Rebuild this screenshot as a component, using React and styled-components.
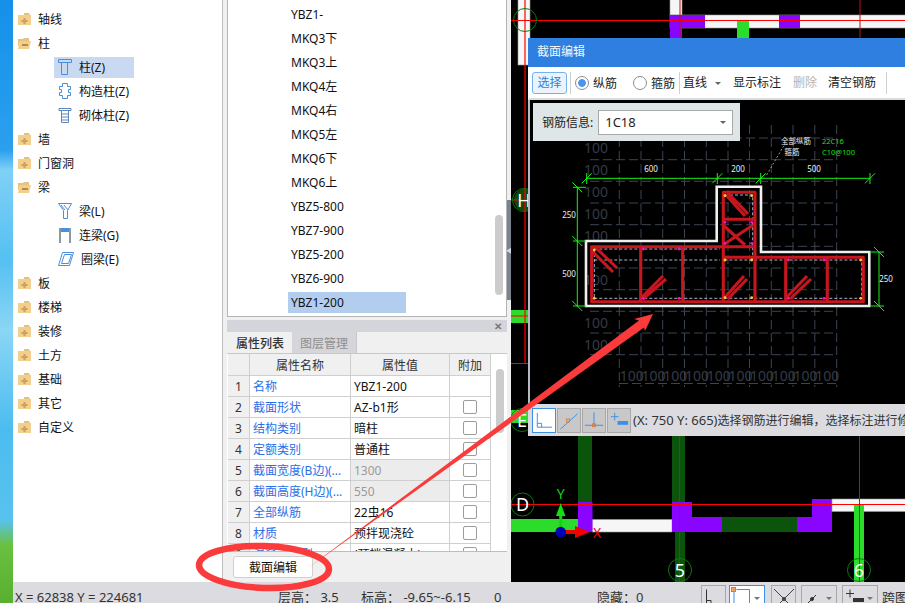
import React from 'react';
import styled, { createGlobalStyle } from 'styled-components';

const FONT = `"Noto Sans", "Noto Sans CJK SC", sans-serif`;

const GlobalStyle = createGlobalStyle`
  html, body { margin:0; padding:0; background:#000; }
  body { font-family:${FONT}; font-size:12px; color:#111; }
`;

const Screen = styled.div`
  position:relative;
  width:905px;
  height:603px;
  display:flex;
  overflow:hidden;
`;
const Wallpaper = styled.div`
  width:13px;
  flex:none;
  background:linear-gradient(#1590ea 0, #2aa0ee 150px, #7fd0f6 170px, #55c0f2 260px, #8ad6f5 330px, #4cbcf0 430px, #58c2ee 520px, #6ac040 545px, #58b030 603px);
`;
const Main = styled.div`
  flex:1;
  display:flex;
  flex-direction:column;
  min-width:0;
`;
const Workspace = styled.div`
  flex:1;
  display:flex;
  min-height:0;
`;
const TreePanel = styled.div`
  width:209px;
  flex:none;
  background:#fff;
  padding-top:7px;
  box-sizing:border-box;
`;
const TreeRow = styled.div`
  height:24px;
  display:flex;
  align-items:center;
  padding-left:${p => (p.$child ? 41 : 4)}px;
  box-sizing:border-box;
`;
const TreeLabel = styled.div`
  display:flex;
  align-items:center;
  gap:${p => (p.$child ? 7 : 6)}px;
  height:21px;
  width:${p => (p.$child ? '80px' : 'auto')};
  padding-left:${p => (p.$child ? 4 : 0)}px;
  box-sizing:border-box;
  background:${p => (p.$active ? '#c9d9f1' : 'transparent')};
  white-space:nowrap;
`;
const MiddlePanel = styled.div`
  position:relative;
  width:289px;
  flex:none;
  display:flex;
  flex-direction:column;
  box-sizing:border-box;
  border-left:1px solid #bdbdbd;
  padding:0 4px;
  background:#f0f0f0;
`;
const ListPanel = styled.div`
  position:relative;
  height:317px;
  flex:none;
  box-sizing:border-box;
  background:#fff;
  border:1px solid #b4b4b4;
  border-top:none;
  padding-top:2px;
`;
const ListRow = styled.div`
  height:24px;
  display:flex;
  align-items:center;
  padding-left:60px;
`;
const ListItem = styled.div`
  width:118px;
  height:21px;
  line-height:21px;
  padding-left:3px;
  box-sizing:border-box;
  background:${p => (p.$active ? '#b3cdee' : 'transparent')};
`;
const ListThumb = styled.div`
  position:absolute;
  right:3px;
  top:215px;
  width:8px;
  height:80px;
  border-radius:4px;
  background:#cccccc;
`;
const Splitter = styled.div`
  position:absolute;
  right:0;
  top:200px;
  width:4px;
  height:100px;
  background:#7b838c;
  display:flex;
  align-items:center;
  justify-content:center;
  color:#d5d8dc;
  font-size:7px;
  overflow:hidden;
`;
const PropPanel = styled.div`
  margin-top:3px;
  height:232px;
  flex:none;
  display:flex;
  flex-direction:column;
  box-sizing:border-box;
  overflow:hidden;
  background:#fff;
  border-bottom:1px solid #bdbdbd;
`;
const PanelBar = styled.div`
  height:12px;
  flex:none;
  background:#d3d5da;
  display:flex;
  align-items:center;
  justify-content:flex-end;
  padding-right:5px;
  color:#777;
  font-size:10px;
  font-weight:700;
`;
const Tabs = styled.div`
  height:22px;
  flex:none;
  display:flex;
  background:#f0f0f0;
  padding-left:1px;
  border-bottom:1px solid #c8c8c8;
  box-sizing:border-box;
`;
const Tab = styled.div`
  width:${p => (p.$active ? 64 : 65)}px;
  text-align:center;
  line-height:23px;
  font-weight:${p => (p.$active ? 500 : 400)};
  color:${p => (p.$active ? '#333' : '#8e8e8e')};
  background:${p => (p.$active ? '#f0f0f0' : '#d6d6da')};
  border-right:${p => (p.$active ? 'none' : '1px solid #c8c8c8')};
  box-sizing:border-box;
`;
const TableWrap = styled.div`
  flex:1;
  display:flex;
  min-height:0;
`;
const PropGrid = styled.div`
  width:264px;
  flex:none;
  display:grid;
  grid-template-columns:22px 101px 99px 41px;
  grid-template-rows:22px;
  grid-auto-rows:21px;
  margin-left:1px;
`;
const Cell = styled.div`
  box-sizing:border-box;
  border-right:1px solid #cfcfcf;
  border-bottom:1px solid #cfcfcf;
  display:flex;
  align-items:center;
  justify-content:${p => (p.$center ? 'center' : 'flex-start')};
  padding-left:${p => (p.$center ? 0 : 3)}px;
  white-space:nowrap;
  overflow:hidden;
  color:${p => p.$color || '#111'};
  background:${p => p.$bg || '#fff'};
`;
const Checkbox = styled.div`
  width:14px;
  height:14px;
  box-sizing:border-box;
  border:1px solid #9c9c9c;
  border-radius:2px;
  background:#fff;
`;
const ScrollArea = styled.div`
  flex:1;
  display:flex;
  justify-content:center;
  background:#fff;
`;
const ScrollThumb = styled.div`
  width:8px;
  height:64px;
  margin-top:15px;
  border-radius:4px;
  background:#cccccc;
`;
const PanelFooter = styled.div`
  flex:1;
  padding:4px 0 0 6px;
`;
const EditButton = styled.div`
  width:80px;
  height:22px;
  line-height:21px;
  text-align:center;
  box-sizing:border-box;
  background:#fff;
  border:1px solid #d0d0d0;
  border-radius:3px;
`;
const Canvas = styled.div`
  position:relative;
  flex:1;
  min-width:0;
  background:#000;
  overflow:hidden;
`;
const SceneSvg = styled.svg`
  display:block;
  width:394px;
  height:582px;
`;
const Dialog = styled.div`
  position:absolute;
  left:17px;
  top:38px;
  width:377px;
  height:398px;
  display:flex;
  flex-direction:column;
`;
const TitleBar = styled.div`
  height:29px;
  flex:none;
  background:#2e7fe0;
  color:#f2f7fd;
  line-height:28px;
  padding-left:9px;
`;
const DialogBar = styled.div`
  height:33px;
  flex:none;
  box-sizing:border-box;
  background:#fff;
  border-left:2px solid #fff;
  border-bottom:2px solid #dcdce0;
  display:flex;
  align-items:center;
  padding-left:2px;
  white-space:nowrap;
`;
const SelectButton = styled.div`
  width:35px;
  height:22px;
  line-height:20px;
  text-align:center;
  box-sizing:border-box;
  border:1px solid #72b2f0;
  border-radius:3px;
  background:#ebf4fd;
  color:#2e7fe0;
`;
const Divider = styled.div`
  width:1px;
  height:22px;
  background:#cfcfcf;
  margin:0 ${p => p.$gap || 4}px 0 3px;
`;
const Radio = styled.label`
  display:flex;
  align-items:center;
  gap:4px;
  width:${p => p.$width}px;
  color:#222;
`;
const RadioDot = styled.span`
  width:14px;
  height:14px;
  border-radius:50%;
  box-sizing:border-box;
  border:1px solid #8c8c8c;
  background:${p => (p.$on ? 'radial-gradient(#4a96ee 0 3.5px, #fff 4.2px)' : '#fff')};
`;
const LineSelect = styled.div`
  width:44px;
  height:22px;
  line-height:22px;
  padding-left:2px;
  box-sizing:border-box;
  position:relative;
  margin-right:2px;
  color:#222;
`;
const Caret = styled.span`
  position:absolute;
  right:${p => p.$right || 4}px;
  top:50%;
  margin-top:-1px;
  border-left:3.5px solid transparent;
  border-right:3.5px solid transparent;
  border-top:3.5px solid ${p => p.$color || '#666'};
`;
const BarAction = styled.div`
  height:22px;
  line-height:22px;
  padding:0 ${p => p.$pad || 5}px;
  margin-right:${p => p.$gap || 1}px;
  color:${p => p.$color || '#222'};
`;
const DrawArea = styled.div`
  position:relative;
  flex:1;
  min-height:0;
  background:#000;
  border-left:2px solid #b6bac2;
`;
const DrawSvg = styled.svg`
  display:block;
  width:375px;
  height:304px;
`;
const InfoPanel = styled.div`
  position:absolute;
  left:3px;
  top:3px;
  width:207px;
  height:38px;
  box-sizing:border-box;
  background:#dfe6e8;
  display:flex;
  align-items:center;
  padding-left:9px;
  gap:5px;
  white-space:nowrap;
  color:#222;
`;
const InfoSelect = styled.div`
  position:relative;
  width:135px;
  height:25px;
  line-height:23px;
  padding-left:6px;
  box-sizing:border-box;
  background:#fff;
  border:1px solid #a9a9a9;
  font-size:13px;
`;
const CoordBar = styled.div`
  height:32px;
  flex:none;
  box-sizing:border-box;
  background:#dcdce0;
  display:flex;
  align-items:center;
  padding-left:4px;
  gap:1px;
  white-space:nowrap;
  overflow:hidden;
  color:#333;
`;
const CoordHint = styled.div`
  margin-left:1px;
`;
const CoordValue = styled.span`
  font-size:13px;
`;
const ToolButton = styled.div`
  box-sizing:border-box;
  flex:none;
  position:relative;
  width:${p => p.$width || 24}px;
  height:25px;
  background:${p => (p.$active ? '#fff' : p.$plain ? 'transparent' : '#c8c8c8')};
  border:1px solid ${p => (p.$active ? '#3d8fe6' : '#a8a8a8')};
  display:flex;
  align-items:center;
  justify-content:flex-start;
`;
const StatusBar = styled.div`
  height:21px;
  flex:none;
  background:#dcdce0;
  display:flex;
  align-items:flex-start;
  padding-top:3px;
  box-sizing:border-box;
  white-space:nowrap;
  font-size:13px;
  color:#333;
`;
const StatusText = styled.div`
  width:${p => p.$width}px;
  flex:none;
  line-height:22px;
  margin-top:1px;
  padding-left:${p => p.$pad || 0}px;
`;
const StatusTools = styled.div`
  display:flex;
  height:25px;
  gap:${p => p.$gap || 5}px;
  margin-right:${p => p.$after || 5}px;
`;
const Annotation = styled.svg`
  position:absolute;
  left:0;
  top:0;
  width:905px;
  height:603px;
  pointer-events:none;
`;

const tree = [
  { label: '轴线' },
  { label: '柱', open: true },
  { label: '柱(Z)', child: 'columnT', active: true },
  { label: '构造柱(Z)', child: 'columnC' },
  { label: '砌体柱(Z)', child: 'columnB' },
  { label: '墙' },
  { label: '门窗洞' },
  { label: '梁', open: true },
  { label: '梁(L)', child: 'beam' },
  { label: '连梁(G)', child: 'link' },
  { label: '圈梁(E)', child: 'ring' },
  { label: '板' },
  { label: '楼梯' },
  { label: '装修' },
  { label: '土方' },
  { label: '基础' },
  { label: '其它' },
  { label: '自定义' },
];

const list = ['YBZ1-', 'MKQ3下', 'MKQ3上', 'MKQ4左', 'MKQ4右', 'MKQ5左', 'MKQ6下', 'MKQ6上', 'YBZ5-800', 'YBZ7-900', 'YBZ5-200', 'YBZ6-900', 'YBZ1-200'];

const props = [
  ['名称', 'YBZ1-200', false],
  ['截面形状', 'AZ-b1形', true],
  ['结构类别', '暗柱', true],
  ['定额类别', '普通柱', true],
  ['截面宽度(B边)(...', '1300', true, true],
  ['截面高度(H边)(...', '550', true, true],
  ['全部纵筋', '22虫16', true],
  ['材质', '预拌现浇砼', true],
  ['混凝土类型', '(预拌混凝土)', true],
];

const Folder = ({ open }) => (
  <svg width="15" height="14" viewBox="0 0 15 14">
    {open ? (
      <>
        <path d="M1 3h5l1-1h5v3H3L1 12z" fill="#e6c27c" />
        <path d="M3 5h11l-2 8H1z" fill="#f2cf8c" />
        <rect x="5" y="8" width="6" height="2" fill="#b08d4a" />
      </>
    ) : (
      <>
        <path d="M7 1h5l1 2H7z" fill="#e6c27c" />
        <rect x="1" y="3" width="13" height="10" fill="#f2cf8c" />
        <path d="M6.5 6h2v2h2v2h-2v2h-2v-2h-2V8h2z" fill="#c9a25c" />
      </>
    )}
  </svg>
);

const ChildIcon = ({ type }) => {
  const blue = '#4a8fdc';
  if (type === 'columnT') {
    return (
      <svg width="14" height="16" viewBox="0 0 14 16" fill="none" stroke={blue}>
        <path d="M.5 .5h13v3h-13zM3.5 3.5v12h6v-12" />
      </svg>
    );
  }
  if (type === 'columnC') {
    return (
      <svg width="14" height="16" viewBox="0 0 14 16" fill="none" stroke={blue}>
        <path d="M4.5 .5h5v3h3v3h-2v3h2v3h-3v3h-5v-3h-3v-3h2v-3h-2v-3h3z" />
      </svg>
    );
  }
  if (type === 'columnB') {
    return (
      <svg width="14" height="15" viewBox="0 0 14 15" fill="none" stroke="#5f86b8">
        <path d="M1 .5h12v2H1zM3.5 2.5v12h7v-12M3.5 6h7M3.5 9h7M3.5 12h7" />
      </svg>
    );
  }
  if (type === 'beam') {
    return (
      <svg width="14" height="16" viewBox="0 0 14 16" fill="none" stroke={blue}>
        <path d="M.5 .5h13l-4 7v8h-4v-8zM3 2l4 5M6 2l4 5" />
      </svg>
    );
  }
  if (type === 'link') {
    return (
      <svg width="14" height="16" viewBox="0 0 14 16" fill="none">
        <rect x="1" y="1" width="12" height="4" fill="#4a8fdc" />
        <path d="M2 1v15M12 1v15" stroke="#8c97a4" strokeWidth="2" />
      </svg>
    );
  }
  return (
    <svg width="16" height="14" viewBox="0 0 16 14" fill="none" stroke={blue}>
      <path d="M4.5 .5h11l-4 13H.5zM6.5 2.5h7l-3 9h-7z" />
    </svg>
  );
};

const Wall = ({ x, y, w, h }) => <rect x={x} y={y} width={w} height={h} fill="#f6f6f6" stroke="#9a9a9a" strokeWidth="0.6" />;
const Block = ({ x, y, w, h, fill }) => <rect x={x} y={y} width={w} height={h} fill={fill} />;
const AxisMark = ({ x, y, label }) => (
  <g>
    <circle cx={x} cy={y} r="11.5" fill="none" stroke="#0b7a0b" />
    <text x={x} y={y + 6.5} textAnchor="middle" fontSize="18" fill="#fff" fontFamily={FONT}>{label}</text>
  </g>
);

const PURPLE = '#8a05ff';
const GREEN = '#2bdc2b';
const DARK = '#0b540b';

const CadScene = () => (
  <SceneSvg viewBox="511 0 394 582">
    <Wall x={518} y={-2} w={12} h={67} />
    <Wall x={670} y={-2} w={12} h={17} />
    <Wall x={670} y={15} w={240} h={13} />
    <Block x={670} y={15} w={35} h={13} fill={PURPLE} />
    <Block x={670} y={15} w={12} h={24} fill={PURPLE} />
    <Block x={779} y={15} w={21} h={13} fill={PURPLE} />
    <Block x={737} y={21} w={12} h={18} fill={GREEN} />
    <Block x={511} y={310} w={17} h={13} fill={GREEN} />
    <Block x={511} y={410} w={17} h={13} fill={GREEN} />
    <circle cx="525" cy="200" r="11" fill="#0c4a0c" />

    <Block x={578} y={436} w={14} h={70} fill={DARK} />
    <Block x={672} y={436} w={13} h={70} fill={DARK} />
    <Block x={675} y={531} w={10} h={51} fill={DARK} />
    <Block x={511} y={519} w={67} h={13} fill={GREEN} />
    <Wall x={592} y={519.5} w={80} h={12.5} />
    <Block x={578} y={502} w={14.5} h={30} fill={PURPLE} />
    <Block x={672} y={502} w={20} h={30} fill={PURPLE} />
    <Block x={692} y={517} w={30} h={15} fill={PURPLE} />
    <Block x={722} y={517} w={75} h={15} fill={DARK} />
    <Block x={797} y={517} w={15} h={15} fill={PURPLE} />
    <Block x={812} y={499} w={20} h={33} fill={PURPLE} />
    <Wall x={832} y={499} w={80} h={12.5} />
    <Block x={854} y={505} w={10} h={77} fill={GREEN} />

    <path d="M511 20.5H905M511 504.5H905M525 0V363.5M511 363.5H528M511 316H528M511 200H525" stroke="#f00" strokeWidth="1.2" />
    <path d="M680 0V38M860 0V38M679.5 436V582M859.5 436V582" stroke="#c01010" strokeWidth="1" />

    <AxisMark x={525} y={20} label="" />
    <AxisMark x={524} y={200} label="H" />
    <AxisMark x={522} y={420} label="E" />
    <AxisMark x={522.5} y={504.5} label="D" />
    <AxisMark x={680} y={570} label="5" />
    <AxisMark x={859} y={570} label="6" />

    <path d="M560.7 532V515" stroke="#10d810" strokeWidth="3" />
    <path d="M556 516l4.7-13 4.7 13z" fill="#10e010" />
    <path d="M561 532H577" stroke="#f00000" strokeWidth="4" />
    <path d="M575 526l15 6-15 6z" fill="#f00000" />
    <circle cx="560.7" cy="532" r="5.3" fill="#0000b4" />
    <text x="560.7" y="499" textAnchor="middle" fontSize="14" fill="#10d810" fontFamily={FONT}>Y</text>
    <text x="597" y="538" textAnchor="middle" fontSize="14" fill="#f00000" fontFamily={FONT}>X</text>
  </SceneSvg>
);

const gridX = [619.3, 641, 662.7, 684.5, 706.3, 728, 749.5, 771.3, 793, 814.8, 836.7];
const gridY = [138, 159.7, 181.3, 203, 224.7, 246.3, 268, 289.7, 311.3, 333, 354.7];
const sideLabels = [148, 170, 192, 214, 236, 280, 323, 345];
const yellowDots = [[594.3, 250], [594.3, 298.3], [725, 195.7], [751.7, 195.7], [725, 260], [751.7, 260], [725, 297.7], [751.7, 297.7], [860.7, 260], [860.7, 298.3]];
const pinkDots = [[643.3, 249], [679, 249], [725, 222.3], [751.7, 222.3], [725, 243.3], [751.7, 243.3], [643.3, 298.3], [679, 298.3], [788.3, 260], [824, 260], [788.3, 298.3], [824, 298.3]];
const rebars = [
  'M591.7 246.7H723.3V192.3H755V257.3H863.3V301.7H591.7Z',
  'M640.7 246.7V301.7M682.7 246.7V301.7M723.3 246.7V301.7M755 257.3V301.7M785.7 257.3V301.7M827.3 257.3V301.7',
  'M723.3 219.3H755M723.3 246.7H755M723.3 257.3H755',
  'M592 251L613 272M595 247L617 268',
  'M726 195L745 216M728 193L748 214',
  'M723 245L753 225M723 225L745 245',
  'M642 297L663 276M643 299L666 279',
  'M725 297L744 276M728 299L747 279',
  'M787 297L807 276M790 299L811 279',
];

const tick = (x, y) => `M${x - 5} ${y - 5}L${x + 5} ${y + 5}`;
const tickUp = (x, y) => `M${x - 5} ${y + 5}L${x + 5} ${y - 5}`;

const SectionDrawing = () => (
  <DrawSvg viewBox="530 100 375 304">
    <g stroke="#3b4452" strokeWidth="1" strokeDasharray="9 4" fill="none">
      {gridX.map(x => <path key={x} d={`M${x} 125V387`} />)}
      {gridY.map(y => <path key={y} d={`M590 ${y}H837`} />)}
      <path d="M619 383.5H837" />
    </g>
    <g fontFamily={FONT} fontSize="14" fill="#333b48">
      {sideLabels.map(y => <text key={y} x="584" y={y + 5}>100</text>)}
      {gridX.slice(0, 10).map(x => <text key={x} x={x + 0.5} y="381">100</text>)}
    </g>
    <path d="M586 241H716.7V186.7H761V252H869.3V306H586Z" fill="none" stroke="#efefef" strokeWidth="2.6" />
    <path d="M594.3 249H720M594.3 298.3H861.7V260H726M594.3 249V298.3M594.3 260H720M725 195H752.7V260" fill="none" stroke="#cfe4ff" strokeWidth="0.8" strokeDasharray="3 2" />
    <g fill="none" stroke="#c8161e" strokeWidth="3.1" strokeLinejoin="round">
      {rebars.map(d => <path key={d} d={d} />)}
    </g>
    {yellowDots.map(([x, y]) => <circle key={`${x}-${y}`} cx={x} cy={y} r="1.4" fill="#ffd21e" />)}
    {pinkDots.map(([x, y]) => <circle key={`${x}-${y}`} cx={x} cy={y} r="1.4" fill="#f014d8" />)}
    <g stroke="#18f018" strokeWidth="1" fill="none">
      <path d="M586.7 178.3H870M577.3 187.3V306M879 252V306M573 187.3H586M573 241H586M573 306H586M870 252H884M870 306H884" />
      <path d={[586.7, 717.3, 760.7, 870].map(x => tickUp(x, 178.3)).join('')} />
      <path d={[586.7, 717.3, 760.7, 870].map(x => `M${x} 173V184`).join('')} />
      <path d={[[577.3, 187.3], [577.3, 241], [577.3, 306], [879, 252], [879, 306]].map(([x, y]) => tick(x, y)).join('')} />
    </g>
    <path d="M766.7 175L783 147L788 143" stroke="#b8b8b8" strokeWidth="0.8" strokeDasharray="2 2" fill="none" />
    <g fontFamily={FONT} fontSize="8" fill="#e8f0f8" textAnchor="middle">
      <text x="651" y="172">600</text>
      <text x="738" y="172">200</text>
      <text x="814" y="172">500</text>
      <text x="569" y="218">250</text>
      <text x="569" y="276.5">500</text>
      <text x="886" y="282">250</text>
      <text x="796" y="144" fontSize="7.5">全部纵筋</text>
      <text x="792" y="155" fontSize="7.5">箍筋</text>
    </g>
    <g fontFamily={FONT} fontSize="7.5" fill="#18e018">
      <text x="822" y="144">22C16</text>
      <text x="822" y="155">C10@100</text>
    </g>
  </DrawSvg>
);

const CornerIcon = ({ color = '#3d8fe6' }) => (
  <svg width="23" height="23" viewBox="0 0 23 23" fill="none" stroke={color}>
    <path d="M4.5 3.5V18.5H20M4.5 14.5H9V18.5" strokeWidth="1" />
  </svg>
);
const DiagonalIcon = () => (
  <svg width="23" height="23" viewBox="0 0 23 23" fill="none">
    <path d="M2.5 20.5L20.5 4.5" stroke="#3d8fe6" />
    <rect x="9" y="10" width="3" height="3" stroke="#e8762b" />
  </svg>
);
const CrossIcon = () => (
  <svg width="23" height="23" viewBox="0 0 23 23" fill="none">
    <path d="M2 16.5H21M11.5 3V16" stroke="#3d8fe6" />
    <rect x="10" y="15" width="3" height="3" stroke="#e8762b" />
  </svg>
);
const PlusBarIcon = ({ color = '#3d8fe6' }) => (
  <svg width="23" height="23" viewBox="0 0 23 23" fill="none">
    <path d="M3 7.5H11M7 3.5V11.5" stroke={color} />
    <rect x="10" y="12" width="11" height="4" fill={color} />
  </svg>
);
const SquareOrange = () => (
  <svg width="23" height="23" viewBox="0 0 23 23" fill="none">
    <path d="M6.5 3.5H19.5V23M4 6V23" stroke="#3d8fe6" />
    <rect x="1.5" y="1.5" width="4" height="4" fill="#f2a05a" stroke="#e8762b" />
  </svg>
);
const XIcon = () => (
  <svg width="23" height="23" viewBox="0 0 23 23" fill="none" stroke="#444">
    <path d="M2 3L22 23M22 3L2 23" />
    <circle cx="12" cy="13" r="1.5" fill="#444" />
  </svg>
);
const AngleIcon = () => (
  <svg width="23" height="23" viewBox="0 0 23 23" fill="none" stroke="#333">
    <path d="M2 21L14 9M2 21H22" />
    <circle cx="10" cy="13" r="1.5" fill="#333" />
  </svg>
);

const App = () => (
  <>
    <GlobalStyle />
    <Screen>
      <Wallpaper />
      <Main>
        <Workspace>
          <TreePanel>
            {tree.map(row => (
              <TreeRow key={row.label} $child={!!row.child}>
                <TreeLabel $child={!!row.child} $active={row.active}>
                  {row.child ? <ChildIcon type={row.child} /> : <Folder open={row.open} />}
                  {row.label}
                </TreeLabel>
              </TreeRow>
            ))}
          </TreePanel>
          <MiddlePanel>
            <ListPanel>
              {list.map(name => (
                <ListRow key={name}>
                  <ListItem $active={name === 'YBZ1-200'}>{name}</ListItem>
                </ListRow>
              ))}
              <ListThumb />
            </ListPanel>
            <PropPanel>
              <PanelBar>✕</PanelBar>
              <Tabs>
                <Tab $active>属性列表</Tab>
                <Tab>图层管理</Tab>
              </Tabs>
              <TableWrap>
                <PropGrid>
                  <Cell $bg="#f0f0f0" />
                  <Cell $bg="#f0f0f0" $center $color="#333">属性名称</Cell>
                  <Cell $bg="#f0f0f0" $center $color="#333">属性值</Cell>
                  <Cell $bg="#f0f0f0" $center $color="#333">附加</Cell>
                  {props.map(([name, value, check, locked], i) => (
                    <React.Fragment key={name}>
                      <Cell $bg="#f0f0f0" $center $color="#333">{i + 1}</Cell>
                      <Cell $color="#2a6fe8">{name}</Cell>
                      <Cell $bg={locked ? '#ececec' : '#fff'} $color={locked ? '#9a9a9a' : '#111'}>{value}</Cell>
                      <Cell $center>{check && <Checkbox />}</Cell>
                    </React.Fragment>
                  ))}
                </PropGrid>
                <ScrollArea><ScrollThumb /></ScrollArea>
              </TableWrap>
            </PropPanel>
            <PanelFooter>
              <EditButton>截面编辑</EditButton>
            </PanelFooter>
            <Splitter>◀</Splitter>
          </MiddlePanel>
          <Canvas>
            <CadScene />
            <Dialog>
              <TitleBar>截面编辑</TitleBar>
              <DialogBar>
                <SelectButton>选择</SelectButton>
                <Divider $gap={4} />
                <Radio $width={58}><RadioDot $on />纵筋</Radio>
                <Radio $width={43}><RadioDot />箍筋</Radio>
                <Divider $gap={1} />
                <LineSelect>直线<Caret /></LineSelect>
                <BarAction $pad={6} $gap={0}>显示标注</BarAction>
                <BarAction $pad={5} $gap={1} $color="#b4b4b4">删除</BarAction>
                <BarAction $pad={5} $gap={2}>清空钢筋</BarAction>
                <Divider $gap={0} />
              </DialogBar>
              <DrawArea>
                <SectionDrawing />
                <InfoPanel>
                  钢筋信息:
                  <InfoSelect>1C18<Caret $right={6} /></InfoSelect>
                </InfoPanel>
              </DrawArea>
              <CoordBar>
                <ToolButton $active><CornerIcon /></ToolButton>
                <ToolButton><DiagonalIcon /></ToolButton>
                <ToolButton><CrossIcon /></ToolButton>
                <ToolButton><PlusBarIcon /></ToolButton>
                <CoordHint><CoordValue>(X: 750 Y: 665)</CoordValue>选择钢筋进行编辑，选择标注进行修改</CoordHint>
              </CoordBar>
            </Dialog>
          </Canvas>
        </Workspace>
        <StatusBar>
          <StatusText $width={263} $pad={2}>X = 62838 Y = 224681</StatusText>
          <StatusText $width={83}>层高： 3.5</StatusText>
          <StatusText $width={133}>标高： -9.65~-6.15</StatusText>
          <StatusText $width={103}>0</StatusText>
          <StatusText $width={104}>隐藏：0</StatusText>
          <StatusTools $gap={3} $after={6}>
            <ToolButton $plain $width={25}><CornerIcon color="#333" /></ToolButton>
            <ToolButton $active $width={36}><SquareOrange /><Caret $color="#777" /></ToolButton>
          </StatusTools>
          <StatusTools $gap={5} $after={4}>
            <ToolButton $plain $width={25}><XIcon /></ToolButton>
            <ToolButton $plain $width={36}><AngleIcon /><Caret $color="#777" /></ToolButton>
            <ToolButton $plain $width={36}><PlusBarIcon color="#333" /><Caret $color="#777" /></ToolButton>
          </StatusTools>
          <StatusText $width={40}>跨图</StatusText>
        </StatusBar>
      </Main>
      <Annotation viewBox="0 0 905 603">
        <ellipse cx="264" cy="567" rx="65" ry="21" transform="rotate(2 264 567)" fill="none" stroke="#fb3b3b" strokeWidth="6.5" />
        <polygon points="308,568 639,320.5 634,319 653,314 645,331 644,327.5" fill="#fb3b3b" />
      </Annotation>
    </Screen>
  </>
);

export default App;
